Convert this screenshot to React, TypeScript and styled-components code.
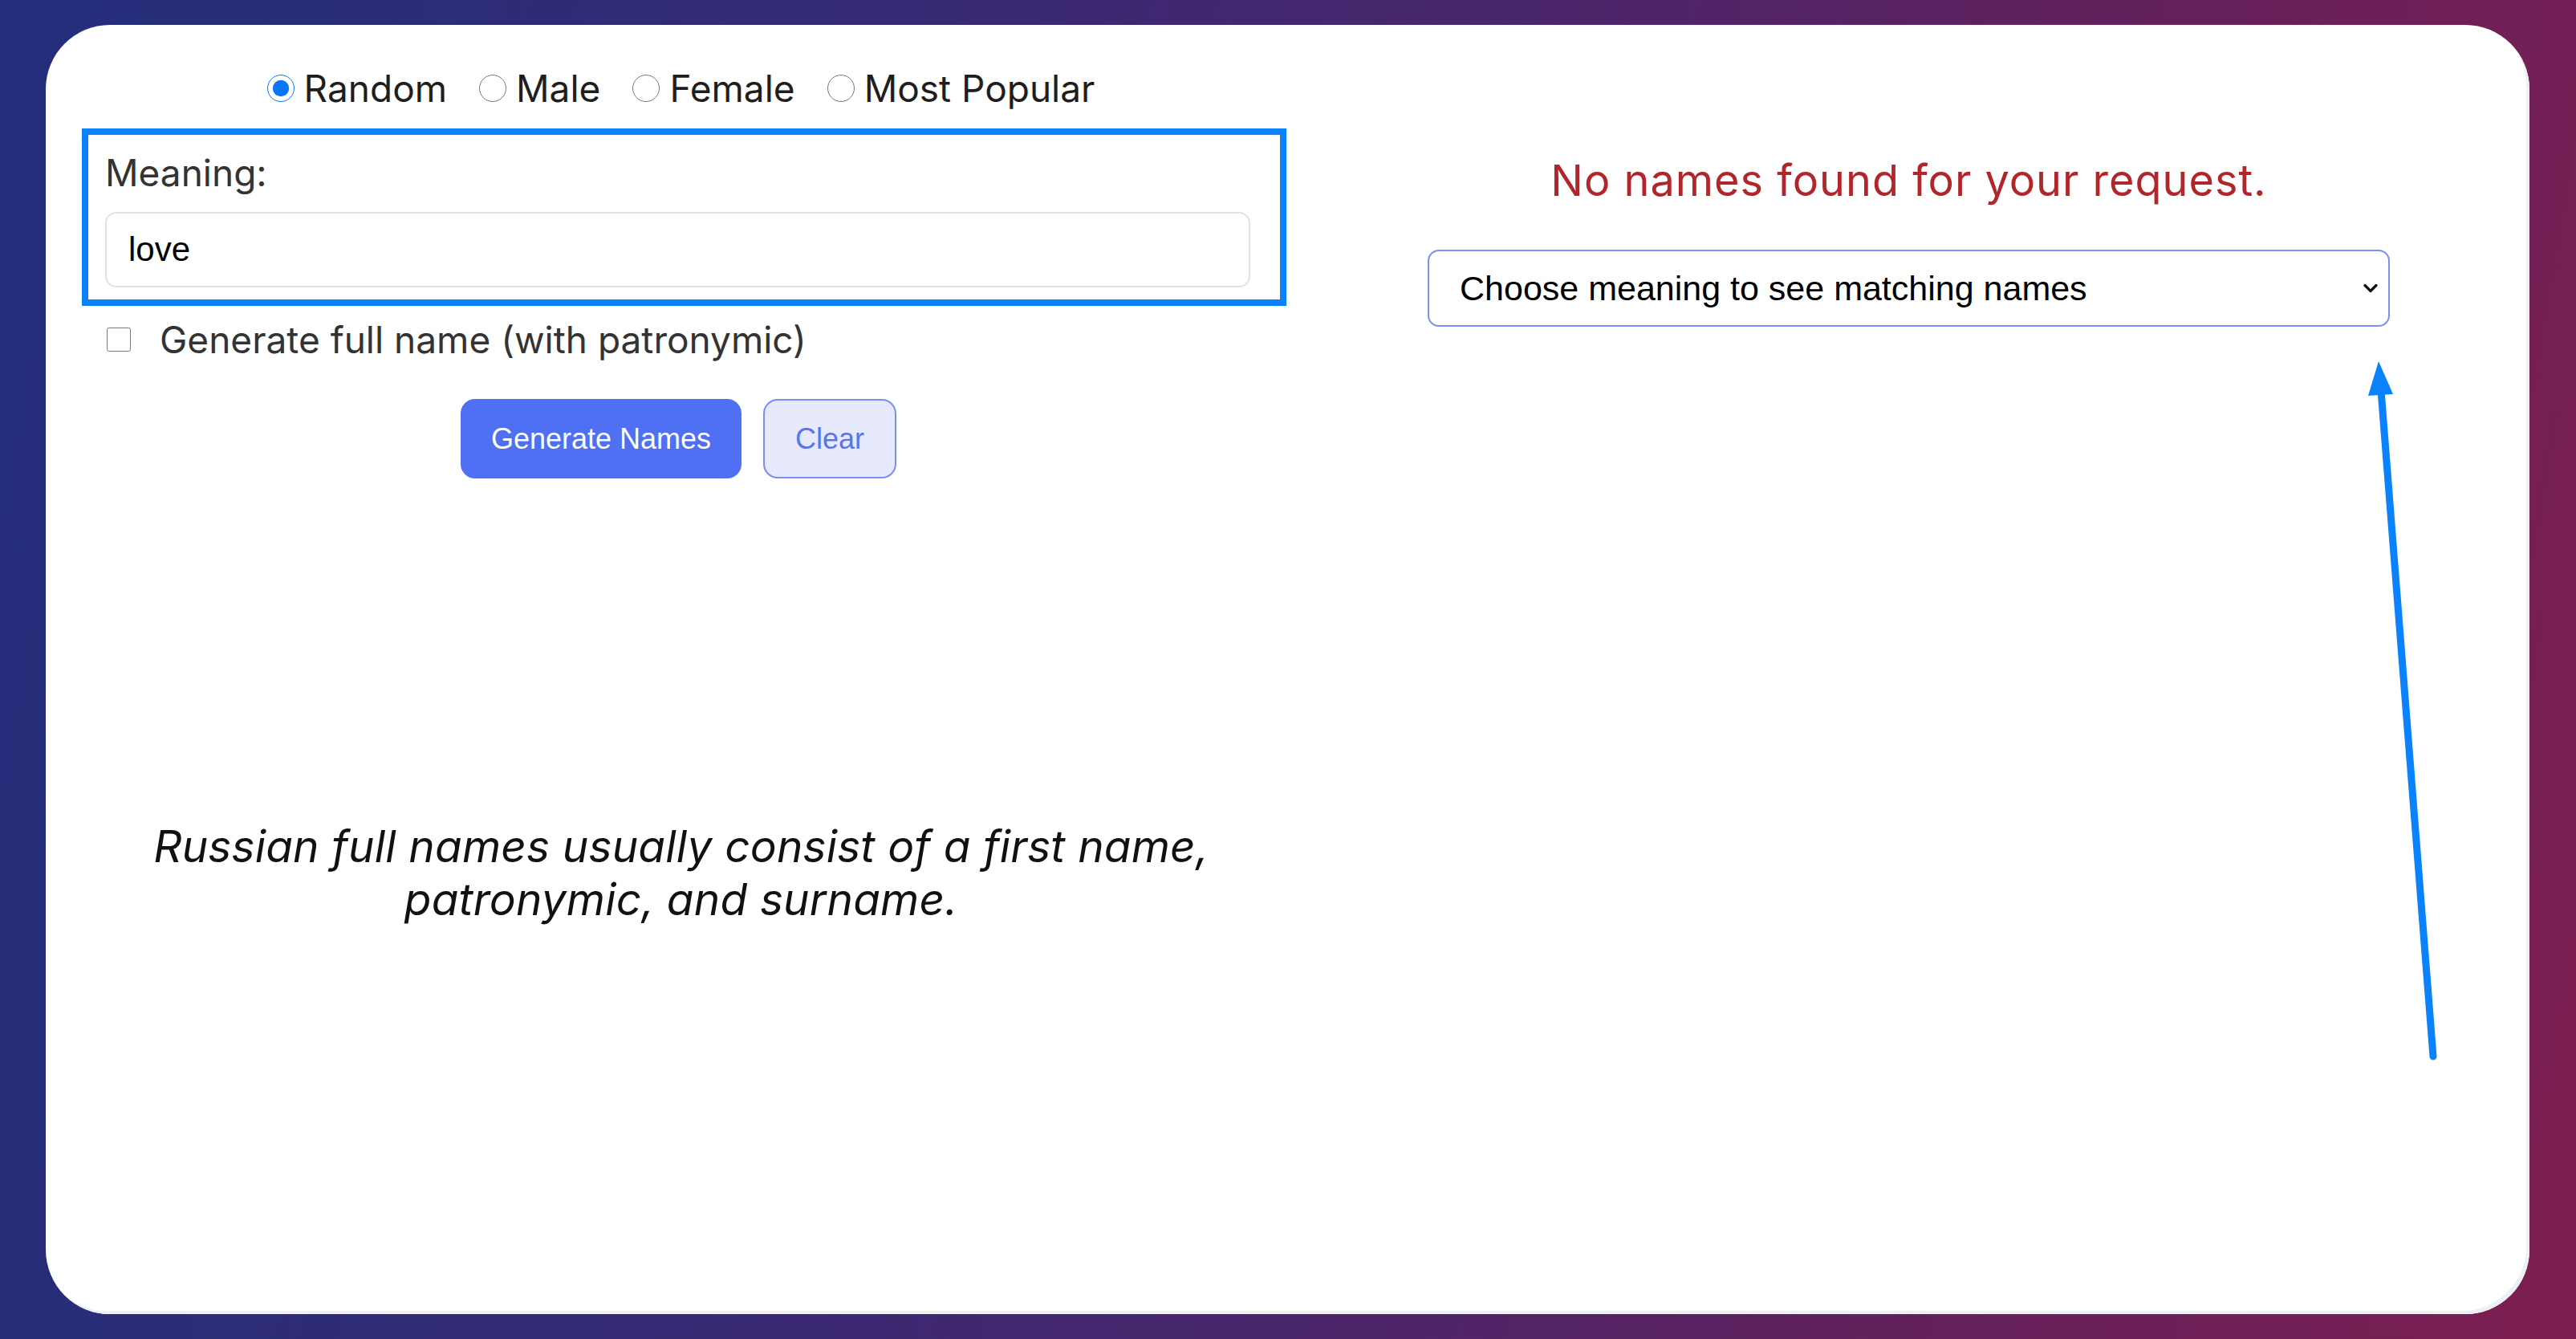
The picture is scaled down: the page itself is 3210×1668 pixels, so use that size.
import React from "react";
import styled, { createGlobalStyle } from "styled-components";
import { ChevronDown } from "lucide-react";

const Global = createGlobalStyle`
  html, body { margin: 0; padding: 0; }
  body {
    width: 3210px;
    height: 1668px;
    overflow: hidden;
    font-family: Inter, "Noto Sans", sans-serif;
    background: linear-gradient(100deg, #232e7b 0%, #342a74 30%, #4a256b 55%, #64205a 78%, #7e1f52 100%);
  }
`;

const Page = styled.div`
  box-sizing: border-box;
  width: 3210px;
  height: 1668px;
  padding: 31px 58px 31px 57px;
`;

const Card = styled.main`
  position: relative;
  box-sizing: border-box;
  height: 100%;
  background: #ffffff;
  border-radius: 80px;
  box-shadow: inset -4px -4px 0 #eef0f6;
  display: flex;
  gap: 176px;
  padding: 51px 0 0 45px;
`;

const LeftCol = styled.section`
  width: 1501px;
  display: flex;
  flex-direction: column;
  align-items: center;
`;

const RightCol = styled.section`
  width: 1199px;
  display: flex;
  flex-direction: column;
  align-items: stretch;
  padding-top: 113px;
`;

const RadioRow = styled.div`
  display: flex;
  align-items: center;
  gap: 40px;
  height: 56px;
  margin-left: -8px;
`;

const RadioLabel = styled.label`
  display: flex;
  align-items: center;
  gap: 12px;
  font-size: 46px;
  color: #1e1e1e;
  line-height: 56px;
`;

const Radio = styled.input`
  width: 34px;
  height: 34px;
  margin: 0;
  accent-color: #0b76f5;
`;

const MeaningBox = styled.div`
  align-self: stretch;
  box-sizing: border-box;
  margin-top: 22px;
  border: 8px solid #0a82fb;
  padding: 19px 37px 15px 21px;
  display: flex;
  flex-direction: column;
`;

const FieldLabel = styled.label`
  font-size: 46px;
  line-height: 56px;
  color: #333333;
`;

const TextInput = styled.input`
  box-sizing: border-box;
  margin-top: 21px;
  height: 94px;
  width: 100%;
  border: 2px solid #e2e2e2;
  border-radius: 14px;
  padding: 0 27px;
  font-family: "Liberation Sans", Arial, sans-serif;
  font-size: 42px;
  color: #000;
  outline: none;
`;

const CheckRow = styled.label`
  align-self: stretch;
  margin-top: 14px;
  padding-left: 31px;
  display: flex;
  align-items: center;
  gap: 36px;
  height: 56px;
  font-size: 46px;
  color: #333333;
`;

const Check = styled.input`
  width: 30px;
  height: 30px;
  margin: 0;
`;

const ButtonRow = styled.div`
  display: flex;
  gap: 27px;
  margin-top: 46px;
  margin-left: -14px;
`;

const Button = styled.button<{ $variant: "primary" | "ghost" }>`
  box-sizing: border-box;
  height: 99px;
  padding: 0 ${(p) => (p.$variant === "primary" ? "36px" : "38px")};
  border-radius: 18px;
  font-family: "Liberation Sans", Arial, sans-serif;
  font-size: 36px;
  cursor: pointer;
  border: 2px solid ${(p) => (p.$variant === "primary" ? "#5070f4" : "#7a8ef2")};
  background: ${(p) => (p.$variant === "primary" ? "#5070f4" : "#e7eafc")};
  color: ${(p) => (p.$variant === "primary" ? "#ffffff" : "#5a74ee")};
`;

const Note = styled.p`
  margin: 425px 0 0 -8px;
  font-size: 55px;
  letter-spacing: 0.15px;
  line-height: 66px;
  font-style: italic;
  text-align: center;
  color: #111111;
`;

const Empty = styled.p`
  margin: 0;
  text-align: center;
  font-size: 54px;
  letter-spacing: 1px;
  line-height: 60px;
  color: #b1262b;
`;

const SelectWrap = styled.div`
  position: relative;
  margin-top: 56px;
`;

const Select = styled.select`
  box-sizing: border-box;
  width: 100%;
  height: 96px;
  appearance: none;
  border: 2px solid #7d8ff2;
  border-radius: 14px;
  background: #ffffff;
  padding: 0 38px;
  font-family: "Liberation Sans", Arial, sans-serif;
  font-size: 43px;
  color: #000;
  outline: none;
`;

const Chevron = styled.span`
  position: absolute;
  right: 10px;
  top: 50%;
  transform: translateY(-50%);
  display: flex;
  pointer-events: none;
  color: #111;
`;

const ArrowSvg = styled.svg`
  position: absolute;
  left: 2870px;
  top: 400px;
  overflow: visible;
`;

export default function App() {
  return (
    <>
      <Global />
      <Page>
        <Card>
          <LeftCol>
            <RadioRow>
              <RadioLabel>
                <Radio type="radio" name="gender" defaultChecked />
                Random
              </RadioLabel>
              <RadioLabel>
                <Radio type="radio" name="gender" />
                Male
              </RadioLabel>
              <RadioLabel>
                <Radio type="radio" name="gender" />
                Female
              </RadioLabel>
              <RadioLabel>
                <Radio type="radio" name="gender" />
                Most Popular
              </RadioLabel>
            </RadioRow>
            <MeaningBox>
              <FieldLabel htmlFor="meaning">Meaning:</FieldLabel>
              <TextInput id="meaning" defaultValue="love" />
            </MeaningBox>
            <CheckRow>
              <Check type="checkbox" />
              Generate full name (with patronymic)
            </CheckRow>
            <ButtonRow>
              <Button $variant="primary">Generate Names</Button>
              <Button $variant="ghost">Clear</Button>
            </ButtonRow>
            <Note>
              Russian full names usually consist of a first name,
              <br />
              patronymic, and surname.
            </Note>
          </LeftCol>
          <RightCol>
            <Empty>No names found for your request.</Empty>
            <SelectWrap>
              <Select defaultValue="">
                <option value="">Choose meaning to see matching names</option>
              </Select>
              <Chevron>
                <ChevronDown size={28} strokeWidth={2.75} />
              </Chevron>
            </SelectWrap>
          </RightCol>
          <ArrowSvg width="140" height="910" viewBox="0 0 140 910">
            <line x1="40" y1="55" x2="105" y2="885" stroke="#0a82fb" strokeWidth="9" strokeLinecap="round" />
            <polygon points="37,19 55,60 24,62" fill="#0a82fb" />
          </ArrowSvg>
        </Card>
      </Page>
    </>
  );
}
